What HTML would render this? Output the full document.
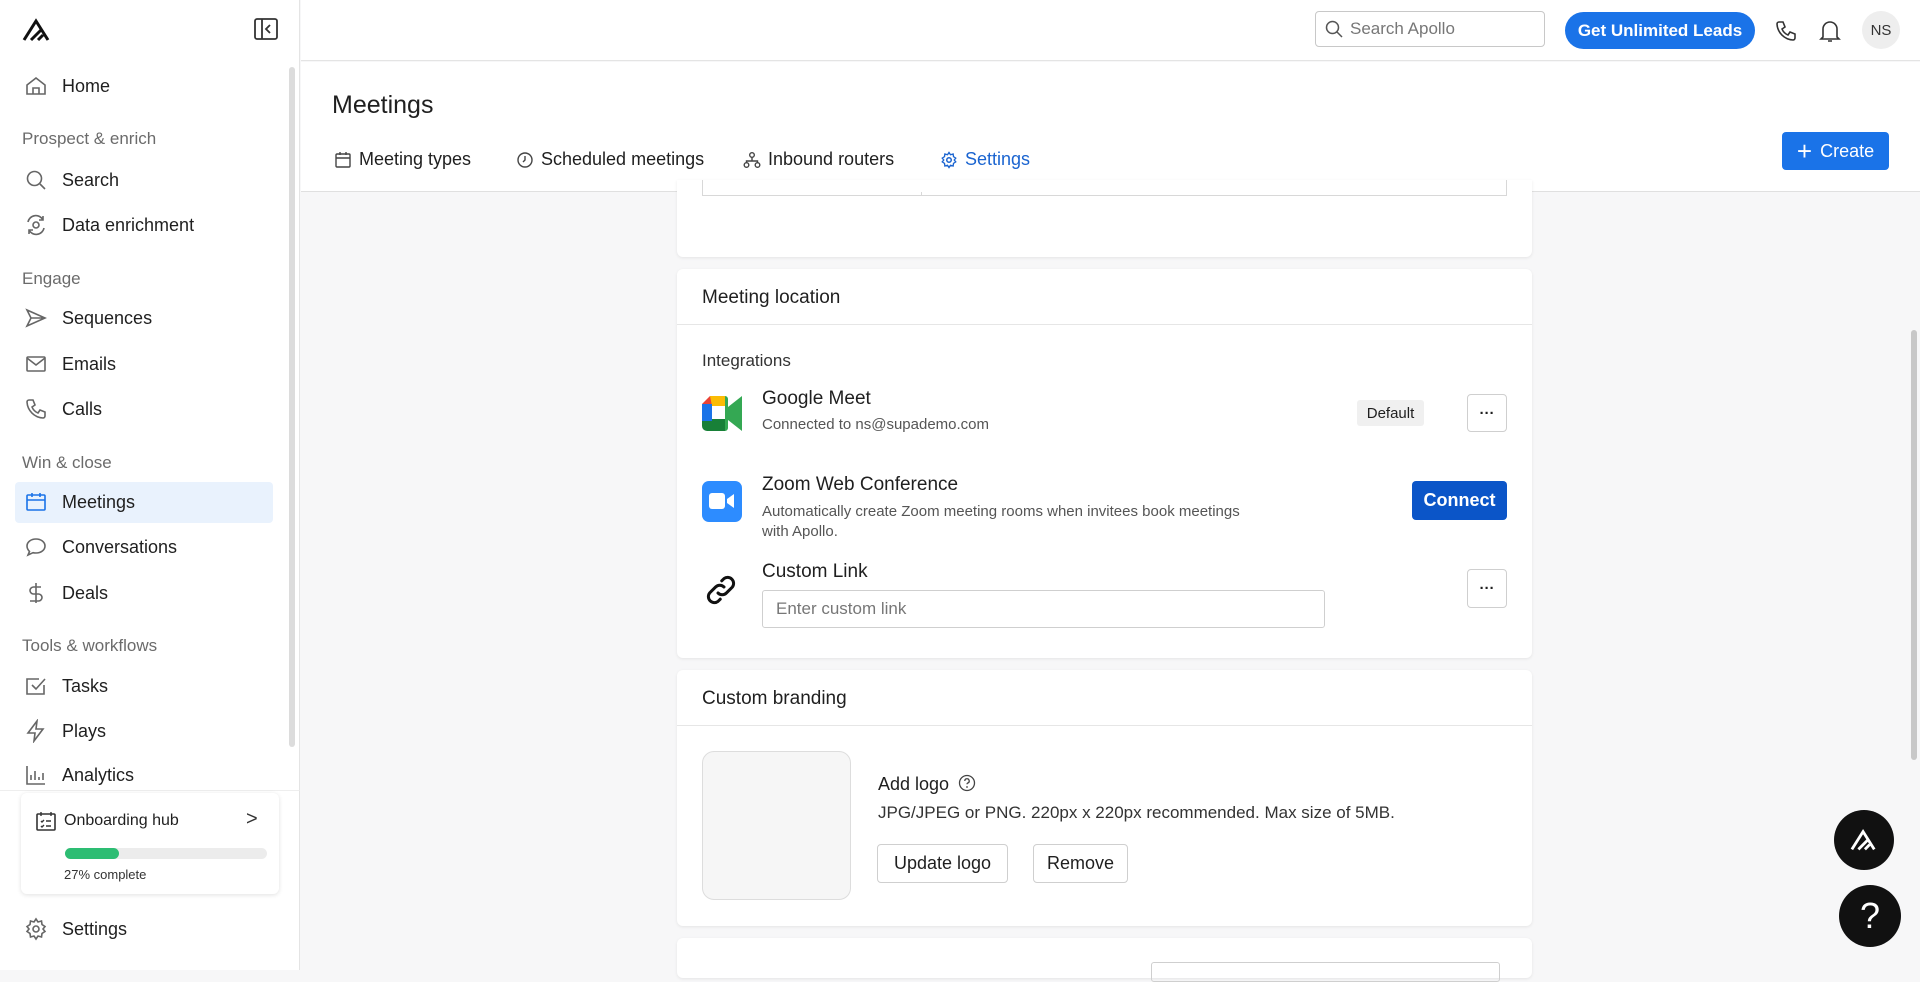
<!DOCTYPE html>
<html><head><meta charset="utf-8"><style>
*{box-sizing:border-box;margin:0;padding:0}
body{width:1920px;height:970px;overflow:hidden;font-family:"Liberation Sans",sans-serif;color:#1f1f1f;background:#f7f7f8;position:relative}
.a{position:absolute}
.sb{left:0;top:0;width:300px;height:970px;background:#fff;border-right:1px solid #e4e4e4}
.nav{left:20px;height:40px;display:flex;align-items:center;font-size:18px;color:#1f1f1f;width:253px}
.nav svg{width:24px;height:24px;margin-left:4px;margin-right:14px;fill:none;stroke:#666;stroke-width:1.6}
.sec{left:22px;font-size:17px;color:#6b6b6b}
.card{left:677px;width:855px;background:#fff;border-radius:6px;box-shadow:0 1px 3px rgba(0,0,0,.08)}
.btn{border:1px solid #cfcfcf;border-radius:4px;background:#fff;display:flex;align-items:center;justify-content:center;font-size:18px}
</style></head><body>
<div class="a sb"></div>
<svg class="a" style="left:22px;top:18px" width="30" height="24" viewBox="0 0 30 24"><path d="M2 22 L14 3 L26 22 M9 22 L19 12 M16 22 L21 17" stroke="#111" stroke-width="3" fill="none"/></svg>
<svg class="a" style="left:254px;top:18px" width="24" height="22" viewBox="0 0 24 22"><rect x="1" y="1" width="22" height="20" rx="2" fill="none" stroke="#333" stroke-width="1.8"/><path d="M8 1V21M16 7l-4 4 4 4" fill="none" stroke="#333" stroke-width="1.8"/></svg>
<div class="a" style="left:289px;top:67px;width:6px;height:680px;background:#dcdcdc;border-radius:3px"></div>

<div class="a nav" style="top:66px"><svg viewBox="0 0 24 24"><path d="M3 11L12 4l9 7v9H3z M9 20v-6h6v6"/></svg>Home</div>
<div class="a sec" style="top:129px">Prospect &amp; enrich</div>
<div class="a nav" style="top:160px"><svg viewBox="0 0 24 24"><circle cx="10.5" cy="10.5" r="7"/><path d="M16 16l5 5"/></svg>Search</div>
<div class="a nav" style="top:205px"><svg viewBox="0 0 24 24"><path d="M4 9a8 8 0 0 1 15-2M20 15a8 8 0 0 1-15 2M19 3v4h-4M5 21v-4h4"/><circle cx="12" cy="12" r="3"/></svg>Data enrichment</div>
<div class="a sec" style="top:269px">Engage</div>
<div class="a nav" style="top:298px"><svg viewBox="0 0 24 24"><path d="M3 4l18 8-18 8 4-8z M7 12h14"/></svg>Sequences</div>
<div class="a nav" style="top:344px"><svg viewBox="0 0 24 24"><rect x="3" y="5" width="18" height="14" rx="1"/><path d="M3 6l9 7 9-7"/></svg>Emails</div>
<div class="a nav" style="top:389px"><svg viewBox="0 0 24 24"><path d="M5 3h4l2 5-3 2a11 11 0 0 0 6 6l2-3 5 2v4a2 2 0 0 1-2 2A17 17 0 0 1 3 5a2 2 0 0 1 2-2z"/></svg>Calls</div>
<div class="a sec" style="top:453px">Win &amp; close</div>
<div class="a" style="left:15px;top:482px;width:258px;height:41px;background:#e9f2fd;border-radius:4px"></div>
<div class="a nav" style="top:482px"><svg viewBox="0 0 24 24" style="stroke:#1a73e8"><rect x="3" y="5" width="18" height="15" rx="1"/><path d="M3 10h18M8 3v4M16 3v4"/></svg>Meetings</div>
<div class="a nav" style="top:527px"><svg viewBox="0 0 24 24"><path d="M12 4c5 0 9 3 9 7s-4 7-9 7c-1 0-2 0-3-.3L4 20l1.5-3.5C4 15 3 13 3 11c0-4 4-7 9-7z"/></svg>Conversations</div>
<div class="a nav" style="top:573px"><svg viewBox="0 0 24 24"><path d="M12 2v20M17 6H9.5a3.5 3.5 0 0 0 0 7h5a3.5 3.5 0 0 1 0 7H6"/></svg>Deals</div>
<div class="a sec" style="top:636px">Tools &amp; workflows</div>
<div class="a nav" style="top:666px"><svg viewBox="0 0 24 24"><path d="M20 11v9H3V5h12M8 11l4 4 9-10"/></svg>Tasks</div>
<div class="a nav" style="top:711px"><svg viewBox="0 0 24 24"><path d="M13 2L4 14h7l-1 8 9-12h-7z"/></svg>Plays</div>
<div class="a nav" style="top:755px"><svg viewBox="0 0 24 24"><path d="M3 3v18h18M7 17v-5M11 17V8M15 17v-3M19 17V10"/></svg>Analytics</div>
<div class="a" style="left:0;top:790px;width:300px;height:180px;background:#fff;border-top:1px solid #eee;border-right:1px solid #e4e4e4"></div>
<div class="a" style="left:21px;top:793px;width:258px;height:101px;background:#fff;border-radius:6px;box-shadow:0 1px 5px rgba(0,0,0,.12)"></div>
<svg class="a" style="left:35px;top:811px" width="22" height="22" viewBox="0 0 22 22"><rect x="2" y="3" width="18" height="16" rx="1" fill="none" stroke="#333" stroke-width="1.6"/><path d="M6 1v4M16 1v4M6 10l1 1 2-2M11 10h5M6 15l1 1 2-2M11 15h5" fill="none" stroke="#333" stroke-width="1.4"/></svg>
<div class="a" style="left:64px;top:812px;font-size:16px">Onboarding hub</div>
<div class="a" style="left:246px;top:808px;font-size:20px;color:#333">&gt;</div>
<div class="a" style="left:65px;top:848px;width:202px;height:11px;background:#ececec;border-radius:6px"></div>
<div class="a" style="left:65px;top:848px;width:54px;height:11px;background:#2dbd73;border-radius:6px"></div>
<div class="a" style="left:64px;top:867px;font-size:13px;color:#333">27% complete</div>
<div class="a nav" style="top:909px"><svg viewBox="0 0 24 24"><circle cx="12" cy="12" r="3"/><path d="M12 2l2 3 3.5-1 .5 3.5 3 2-2 2.5 2 2.5-3 2-.5 3.5L14 19l-2 3-2-3-3.5 1-.5-3.5-3-2 2-2.5-2-2.5 3-2L6.5 4 10 5z"/></svg>Settings</div>

<!-- top header -->
<div class="a" style="left:301px;top:0;width:1619px;height:61px;background:#fff;border-bottom:1px solid #e4e4e4"></div>
<div class="a" style="left:1315px;top:11px;width:230px;height:36px;border:1px solid #c8c8c8;border-radius:4px;background:#fff"></div>
<svg class="a" style="left:1325px;top:20px" width="18" height="18" viewBox="0 0 18 18"><circle cx="7.5" cy="7.5" r="6" fill="none" stroke="#555" stroke-width="1.5"/><path d="M12 12l5 5" stroke="#555" stroke-width="1.5"/></svg>
<div class="a" style="left:1350px;top:19px;font-size:17px;color:#777">Search Apollo</div>
<div class="a" style="left:1565px;top:12px;width:190px;height:37px;background:#1a73e8;border-radius:19px;color:#fff;font-size:17px;font-weight:bold;display:flex;align-items:center;justify-content:center">Get Unlimited Leads</div>
<svg class="a" style="left:1774px;top:19px" width="24" height="24" viewBox="0 0 24 24"><path d="M5 3h4l2 5-3 2a11 11 0 0 0 6 6l2-3 5 2v4a2 2 0 0 1-2 2A17 17 0 0 1 3 5a2 2 0 0 1 2-2z" fill="none" stroke="#333" stroke-width="1.6"/></svg>
<svg class="a" style="left:1818px;top:18px" width="24" height="26" viewBox="0 0 24 26"><path d="M5 19V11a7 7 0 0 1 14 0v8l2 2H3zM10 23h4" fill="none" stroke="#333" stroke-width="1.6"/></svg>
<div class="a" style="left:1862px;top:11px;width:38px;height:38px;border-radius:50%;background:#eee;font-size:15px;color:#333;display:flex;align-items:center;justify-content:center">NS</div>

<!-- page header -->
<div class="a" style="left:301px;top:62px;width:1619px;height:130px;background:#fff;border-bottom:1px solid #e0e0e0"></div>
<div class="a" style="left:332px;top:91px;font-size:25px">Meetings</div>
<div class="a" style="left:334px;top:149px;font-size:18px;display:flex;align-items:center"><svg width="18" height="18" viewBox="0 0 18 18" style="margin-right:7px"><rect x="2" y="3" width="14" height="13" rx="1" fill="none" stroke="#444" stroke-width="1.4"/><path d="M2 7h14M6 1v3M12 1v3" stroke="#444" stroke-width="1.4"/></svg>Meeting types</div>
<div class="a" style="left:516px;top:149px;font-size:18px;display:flex;align-items:center"><svg width="18" height="18" viewBox="0 0 18 18" style="margin-right:7px"><circle cx="9" cy="9" r="7" fill="none" stroke="#444" stroke-width="1.4"/><path d="M9 5v4l-2 2" fill="none" stroke="#444" stroke-width="1.4"/></svg>Scheduled meetings</div>
<div class="a" style="left:743px;top:149px;font-size:18px;display:flex;align-items:center"><svg width="18" height="18" viewBox="0 0 18 18" style="margin-right:7px"><circle cx="9" cy="4" r="2.3" fill="none" stroke="#444" stroke-width="1.4"/><circle cx="3.5" cy="14" r="2.3" fill="none" stroke="#444" stroke-width="1.4"/><circle cx="14.5" cy="14" r="2.3" fill="none" stroke="#444" stroke-width="1.4"/><path d="M9 6v4M3.5 12v-2h11v2" fill="none" stroke="#444" stroke-width="1.4"/></svg>Inbound routers</div>
<div class="a" style="left:940px;top:149px;font-size:18px;color:#1a64d0;display:flex;align-items:center"><svg width="18" height="18" viewBox="0 0 24 24" style="margin-right:7px"><circle cx="12" cy="12" r="3" fill="none" stroke="#1a64d0" stroke-width="2"/><path d="M12 2l2 3 3.5-1 .5 3.5 3 2-2 2.5 2 2.5-3 2-.5 3.5L14 19l-2 3-2-3-3.5 1-.5-3.5-3-2 2-2.5-2-2.5 3-2L6.5 4 10 5z" fill="none" stroke="#1a64d0" stroke-width="1.8"/></svg>Settings</div>
<div class="a" style="left:937px;top:189px;width:94px;height:2px;background:#1a64d0"></div>
<div class="a" style="left:1782px;top:132px;width:107px;height:38px;background:#1a73e8;border-radius:4px;color:#fff;font-size:18px;display:flex;align-items:center;justify-content:center"><span style="font-size:26px;margin-right:8px;line-height:1">+</span>Create</div>

<!-- card 1 -->
<div class="a card" style="top:180px;height:77px;border-radius:0 0 6px 6px"></div>
<div class="a" style="left:702px;top:180px;width:805px;height:16px;border:1px solid #d8d8d8;border-top:none"></div>
<div class="a" style="left:921px;top:192px;width:1px;height:4px;background:#d8d8d8"></div>

<!-- card 2 -->
<div class="a card" style="top:269px;height:389px"></div>
<div class="a" style="left:702px;top:287px;font-size:19px">Meeting location</div>
<div class="a" style="left:677px;top:324px;width:855px;height:1px;background:#e6e6e6"></div>
<div class="a" style="left:702px;top:351px;font-size:17px;color:#333">Integrations</div>
<svg class="a" style="left:702px;top:396px" width="40" height="35" viewBox="0 0 40 35"><path d="M0 8L8 0h15v10H10v15H0z" fill="#ea4335"/><path d="M8 0h15v10H10z" fill="#fbbc04"/><path d="M0 8h10v17H0z" fill="#1a73e8"/><path d="M0 25h10v-2h13v12H5a5 5 0 0 1-5-5z" fill="#188038"/><path d="M23 0h0a3 3 0 0 1 3 3v8l14-11v35l-14-11v8a3 3 0 0 1-3 3V23h0z" fill="#34a853"/><path d="M23 10h3v14h-3z" fill="#34a853"/><rect x="10" y="10" width="13" height="13" fill="#fff"/></svg>
<div class="a" style="left:762px;top:388px;font-size:19px">Google Meet</div>
<div class="a" style="left:762px;top:416px;font-size:15px;color:#555">Connected to ns@supademo.com</div>
<div class="a" style="left:1357px;top:400px;width:67px;height:26px;background:#f0f0f0;border-radius:3px;font-size:15px;display:flex;align-items:center;justify-content:center">Default</div>
<div class="a btn" style="left:1467px;top:394px;width:40px;height:38px;font-weight:bold;font-size:15px">···</div>
<div class="a" style="left:702px;top:481px;width:40px;height:41px;background:#2d8cff;border-radius:7px"></div>
<svg class="a" style="left:708px;top:490px" width="28" height="22" viewBox="0 0 28 22"><rect x="1" y="3" width="16" height="16" rx="3" fill="#fff"/><path d="M19 9l7-5v14l-7-5z" fill="#fff"/></svg>
<div class="a" style="left:762px;top:474px;font-size:19px">Zoom Web Conference</div>
<div class="a" style="left:762px;top:502px;font-size:15px;color:#555;line-height:20px;width:505px">Automatically create Zoom meeting rooms when invitees book meetings with Apollo.</div>
<div class="a" style="left:1412px;top:481px;width:95px;height:39px;background:#0b55c8;border-radius:4px;color:#fff;font-size:18px;font-weight:bold;display:flex;align-items:center;justify-content:center">Connect</div>
<svg class="a" style="left:703px;top:572px" width="36" height="36" viewBox="0 0 24 24"><path d="M10 14a4 4 0 0 0 5.6 0l4-4a4 4 0 0 0-5.6-5.6l-1.5 1.5M14 10a4 4 0 0 0-5.6 0l-4 4a4 4 0 0 0 5.6 5.6l1.5-1.5" fill="none" stroke="#111" stroke-width="2" stroke-linecap="round"/></svg>
<div class="a" style="left:762px;top:561px;font-size:19px">Custom Link</div>
<div class="a" style="left:762px;top:590px;width:563px;height:38px;border:1px solid #cfcfcf;border-radius:3px;font-size:17px;color:#777;padding:8px 0 0 13px">Enter custom link</div>
<div class="a btn" style="left:1467px;top:569px;width:40px;height:39px;font-weight:bold;font-size:15px">···</div>

<!-- card 3 -->
<div class="a card" style="top:670px;height:256px"></div>
<div class="a" style="left:702px;top:688px;font-size:19px">Custom branding</div>
<div class="a" style="left:677px;top:725px;width:855px;height:1px;background:#e6e6e6"></div>
<div class="a" style="left:702px;top:751px;width:149px;height:149px;border:1px solid #ddd;border-radius:12px;background:#f6f6f6"></div>
<div class="a" style="left:878px;top:774px;font-size:18px">Add logo</div>
<svg class="a" style="left:958px;top:774px" width="18" height="18" viewBox="0 0 18 18"><circle cx="9" cy="9" r="7.5" fill="none" stroke="#444" stroke-width="1.3"/><path d="M6.8 7a2.2 2.2 0 1 1 3 2c-.6.3-.8.7-.8 1.3" fill="none" stroke="#444" stroke-width="1.3"/><circle cx="9" cy="13" r=".9" fill="#444"/></svg>
<div class="a" style="left:878px;top:803px;font-size:17px;color:#333">JPG/JPEG or PNG. 220px x 220px recommended. Max size of 5MB.</div>
<div class="a btn" style="left:877px;top:844px;width:131px;height:39px">Update logo</div>
<div class="a btn" style="left:1033px;top:844px;width:95px;height:39px">Remove</div>

<!-- card 4 -->
<div class="a card" style="top:938px;height:40px"></div>
<div class="a" style="left:1151px;top:962px;width:349px;height:20px;border:1px solid #cfcfcf;border-radius:3px"></div>

<!-- scrollbar -->
<div class="a" style="left:1911px;top:330px;width:6px;height:430px;background:#c8c8c8;border-radius:3px"></div>

<!-- floating -->
<div class="a" style="left:1834px;top:810px;width:60px;height:60px;border-radius:50%;background:#111"></div>
<svg class="a" style="left:1850px;top:828px" width="28" height="24" viewBox="0 0 30 24"><path d="M2 22 L14 3 L26 22 M9 22 L19 12 M16 22 L21 17" stroke="#fff" stroke-width="3" fill="none"/></svg>
<div class="a" style="left:1839px;top:885px;width:62px;height:62px;border-radius:50%;background:#111;color:#fff;font-size:36px;display:flex;align-items:center;justify-content:center">?</div>
</body></html>
